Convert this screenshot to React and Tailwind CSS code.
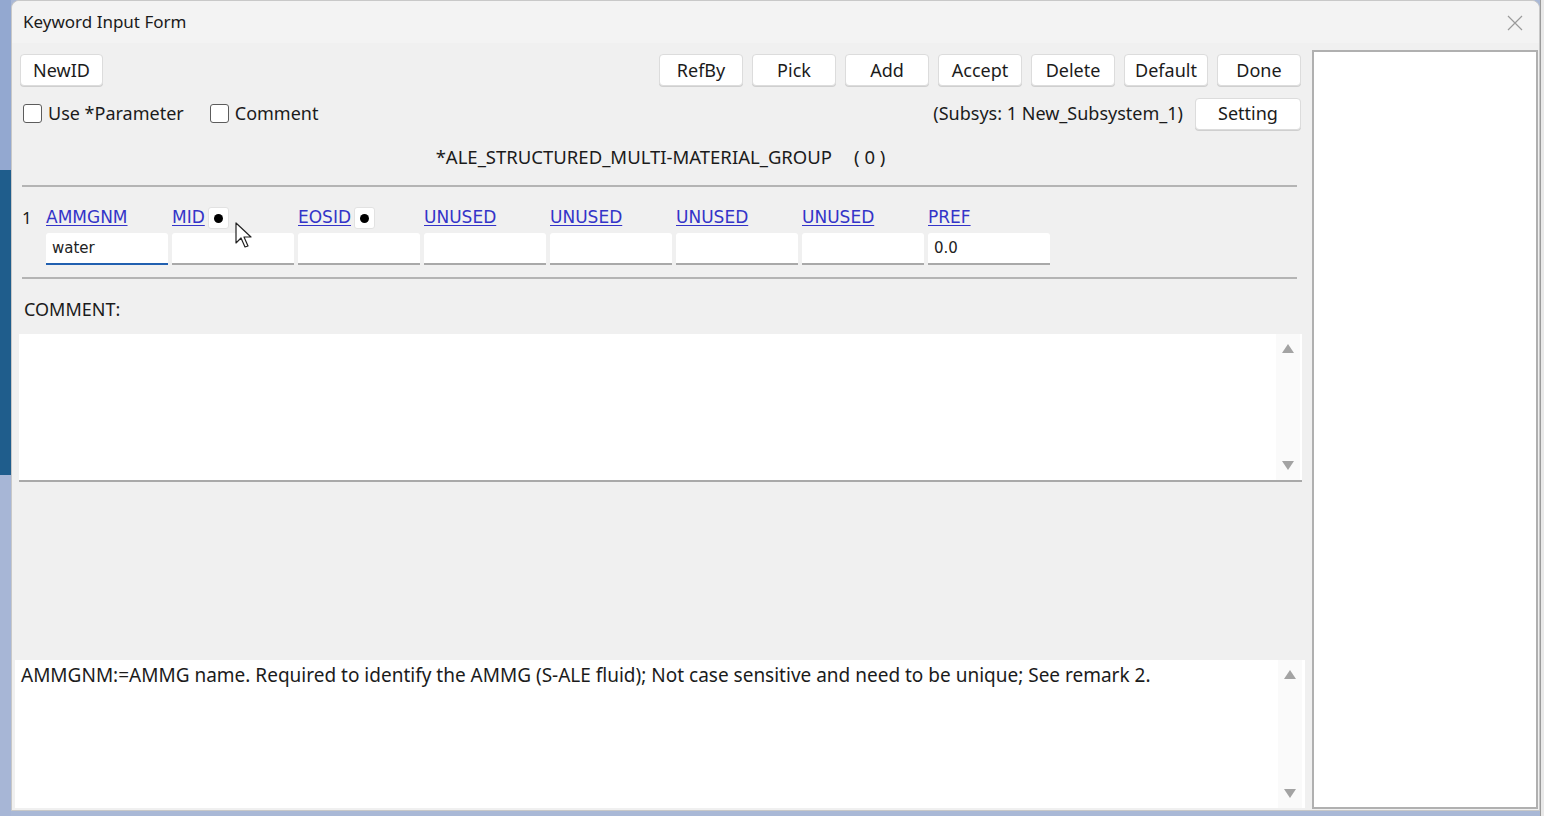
import React from 'react';

const ui = { fontFamily: '"Noto Sans", "Open Sans", sans-serif' };
const dv = { fontFamily: '"DejaVu Sans", Verdana, sans-serif' };

const actions = ['RefBy', 'Pick', 'Add', 'Accept', 'Delete', 'Default', 'Done'];

const fields = [
  { name: 'AMMGNM', value: 'water', focus: true },
  { name: 'MID', dot: true },
  { name: 'EOSID', dot: true },
  { name: 'UNUSED' },
  { name: 'UNUSED' },
  { name: 'UNUSED' },
  { name: 'UNUSED' },
  { name: 'PREF', value: '0.0' },
];

function Btn({ children, className = '' }) {
  return (
    <button
      className={`h-[32px] bg-white border border-[#dcdcdc] rounded-[4px] text-[18px] text-[#1b1b1b] shadow-[0_1px_0_#cfcfcf] ${className}`}
      style={ui}
    >
      {children}
    </button>
  );
}

function Check({ label }) {
  return (
    <label className="flex items-center gap-[6px] text-[18px] text-[#1b1b1b]" style={ui}>
      <span className="w-[19px] h-[19px] rounded-[3px] border-[1.5px] border-[#5c5c5c] bg-white" />
      {label}
    </label>
  );
}

function ScrollArrows({ className = '' }) {
  return (
    <div className={`w-[24px] flex flex-col items-center justify-between py-[10px] bg-[#fafafa] ${className}`}>
      <svg width="12" height="9" viewBox="0 0 12 9"><path d="M6 0 L12 9 L0 9 Z" fill="#a3a3a3" /></svg>
      <svg width="12" height="9" viewBox="0 0 12 9"><path d="M0 0 L12 0 L6 9 Z" fill="#a3a3a3" /></svg>
    </div>
  );
}

export default function App() {
  return (
    <div className="w-[1544px] h-[816px] flex overflow-hidden bg-[#a9b8d6] relative">
      {/* desktop strip on the left */}
      <div className="w-[11px] flex flex-col shrink-0">
        <div className="h-[170px] bg-[#93a8d0]" />
        <div className="h-[305px] bg-[#1f5d8c]" />
        <div className="flex-1 bg-[#a7b6d6]" />
      </div>

      {/* dialog window */}
      <div className="w-[1529px] h-[811px] shrink-0 bg-[#f0f0f0] rounded-t-[8px] border border-[#c8c8c8] flex flex-col">
        {/* title bar */}
        <div className="h-[42px] flex items-center justify-between pl-[11px] pr-[16px] bg-[#f3f3f3] rounded-t-[8px]">
          <span className="text-[17px] text-[#1b1b1b]" style={ui}>Keyword Input Form</span>
          <svg width="16" height="16" viewBox="0 0 16 16" className="mt-[2px]">
            <path d="M1 1 L15 15 M15 1 L1 15" stroke="#9a9a9a" strokeWidth="1.2" />
          </svg>
        </div>

        <div className="flex-1 flex">
          {/* left form panel */}
          <div className="w-[1294px] flex flex-col pl-[8px] pr-[5px] pt-[11px] pb-[2px]">
            <div className="flex justify-between">
              <Btn className="w-[83px]">NewID</Btn>
              <div className="flex gap-[9px]">
                {actions.map((a) => (
                  <Btn key={a} className="w-[84px]">{a}</Btn>
                ))}
              </div>
            </div>

            <div className="flex items-center justify-between mt-[12px] h-[31px]">
              <div className="flex items-center gap-[26px] pl-[3px]">
                <Check label="Use *Parameter" />
                <Check label="Comment" />
              </div>
              <div className="flex items-center gap-[12px]">
                <span className="text-[18px] text-[#1b1b1b]" style={ui}>(Subsys: 1 New_Subsystem_1)</span>
                <Btn className="w-[106px] h-[31px]">Setting</Btn>
              </div>
            </div>

            <div className="h-[56px] flex items-center justify-center gap-[22px] text-[18.5px] text-[#1b1b1b]" style={ui}>
              <span>*ALE_STRUCTURED_MULTI-MATERIAL_GROUP</span>
              <span>( 0 )</span>
            </div>

            <div className="ml-[2px] mr-[4px] h-[2px] bg-[#b4b4b4]" />

            {/* card row */}
            <div className="flex pl-[2px] pt-[18px] relative">
              <div className="w-[24px] text-[17px] text-[#1b1b1b] leading-[26px]" style={ui}>1</div>
              <div className="flex">
                {fields.map((f, i) => (
                  <div key={i} className="w-[126px] flex flex-col">
                    <div className="h-[26px] flex items-center gap-[3px]">
                      <span className="text-[17px] text-[#3434c8] underline underline-offset-[2px]" style={dv}>{f.name}</span>
                      {f.dot && (
                        <span className="w-[21px] h-[22px] bg-white rounded-[3px] border border-[#e2e2e2] flex items-center justify-center">
                          <span className="w-[9px] h-[9px] rounded-full bg-black" />
                        </span>
                      )}
                    </div>
                    <div
                      className={`mt-[2px] w-[122px] h-[32px] bg-white rounded-t-[3px] border-b-2 flex items-center px-[6px] text-[15px] text-[#222] ${f.focus ? 'border-[#2160b0]' : 'border-[#a9a9a9]'}`}
                      style={dv}
                    >
                      {f.value}
                    </div>
                  </div>
                ))}
              </div>
              {/* mouse pointer */}
              <svg width="20" height="28" viewBox="0 0 20 28" className="absolute left-[215px] top-[35px]">
                <path d="M1 1 L1 21 L6 16 L10 25 L13 24 L9 15 L16 15 Z" fill="#fff" stroke="#222" strokeWidth="1.2" strokeLinejoin="round" />
              </svg>
            </div>

            <div className="mt-[12px] ml-[2px] mr-[4px] h-[2px] bg-[#b4b4b4]" />

            <div className="h-[55px] flex items-center pt-[6px] pl-[4px] text-[18px] text-[#1b1b1b]" style={ui}>COMMENT:</div>

            <div className="ml-[-1px] mr-[-1px] h-[148px] bg-white border-b-2 border-[#a9a9a9] flex justify-end">
              <ScrollArrows className="mr-[2px]" />
            </div>

            <div className="flex-1" />

            <div className="ml-[-5px] mr-[-4px] h-[148px] bg-white flex">
              <p className="flex-1 pl-[6px] pt-[1px] text-[19px] text-[#1b1b1b]" style={ui}>
                AMMGNM:=AMMG name. Required to identify the AMMG (S-ALE fluid); Not case sensitive and need to be unique; See remark 2.
              </p>
              <ScrollArrows className="mr-[3px]" />
            </div>
          </div>

          {/* right side list panel */}
          <div className="w-[226px] mt-[7px] mb-[1px] ml-[6px] bg-white border-2 border-[#b0b0b0]" />
        </div>
      </div>

      {/* edge of a window behind */}
      <div className="flex-1 bg-[#e9e9e9] border-l border-[#9a9a9a]" />
    </div>
  );
}
